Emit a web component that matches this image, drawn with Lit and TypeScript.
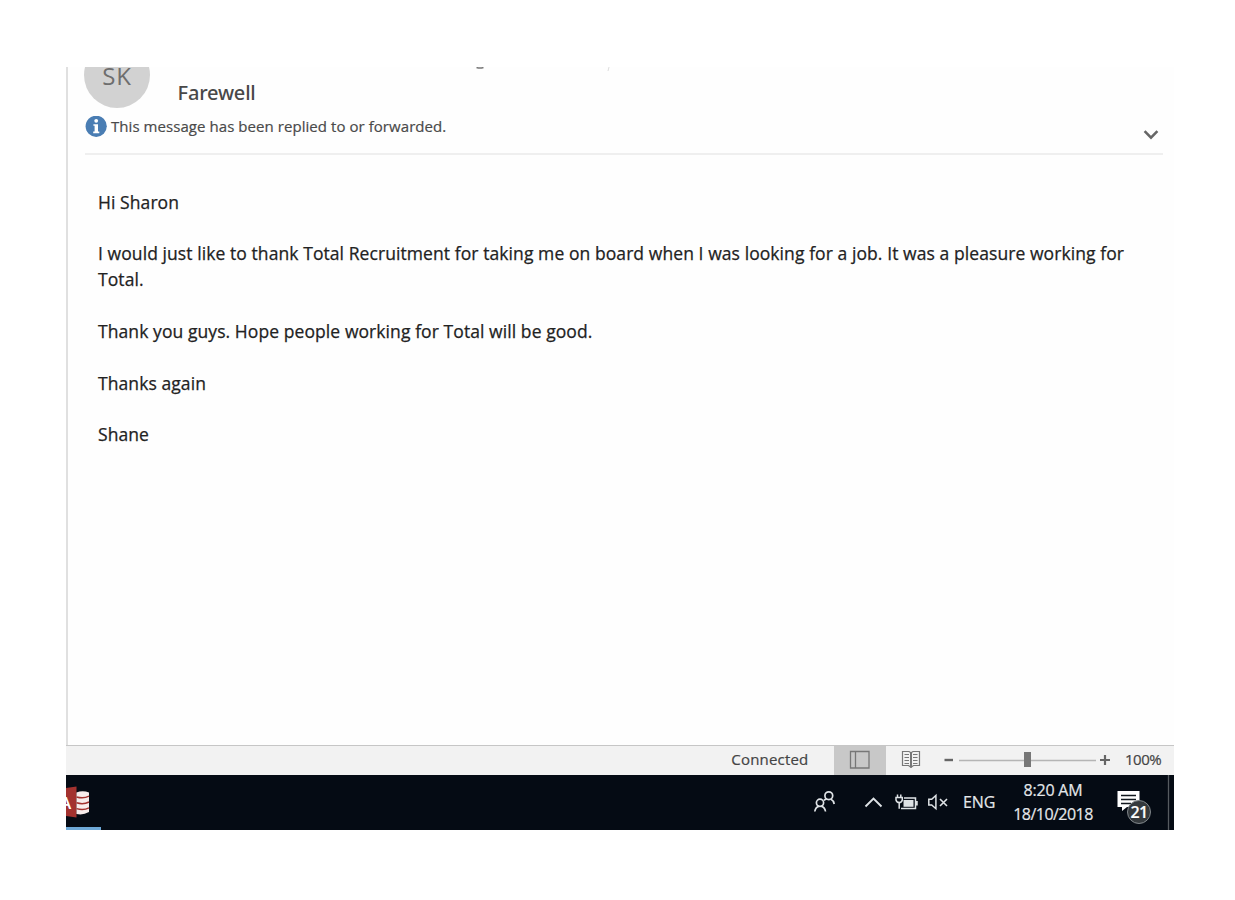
import { LitElement, html, css, svg } from "lit";
import { customElement, property } from "lit/decorators.js";

@customElement("message-header")
class MessageHeader extends LitElement {
  static styles = css`
    :host { display: block; padding: 0 11px 0 16px; position: relative; }
    .top { display: flex; height: 49px; }
    .avatar {
      flex: none; width: 66px; height: 66px; margin: -25px 0 0 0; border-radius: 50%;
      background: #d2d2d2; color: #6e6e6e; font-size: 24px; line-height: 68px;
      text-align: center; letter-spacing: 0.8px;
    }
    .subject {
      margin: 12px 0 0 27.600px; font-family: "Noto Sans", sans-serif; font-size: 20px;
      line-height: 27px; font-weight: 500; color: #484848; white-space: nowrap; letter-spacing: -0.200px;
    }
    .info {
      display: flex; height: 37px; border-bottom: 2px solid #efefef;
      margin-left: 1px; color: #4a4a4a; font-size: 15px; line-height: 20px; white-space: nowrap;
    }
    .info svg { flex: none; display: block; }
    .note { margin-left: 4px; flex: 1; letter-spacing: 0.060px; -webkit-text-stroke: 0.200px #4a4a4a; }
    .chev { margin: 11px 3px 0 0; }
    .trace { position: absolute; left: 407px; top: 0; }
  `;
  render() {
    return html`
      <div class="top">
        <div class="avatar">SK</div>
        <div class="subject">Farewell</div>
      </div>
      <div class="info">
        <svg width="22" height="22" viewBox="0 0 22 22">
          <circle cx="11.2" cy="10.3" r="10.6" fill="#4a7db3" />
          <circle cx="11.2" cy="4.8" r="1.9" fill="#fff" />
          <path d="M8.400 8.200h4.600v7.400h1.300v1.600H8.200v-1.600h1.400v-5.800H8.400z" fill="#fff" />
        </svg>
        <span class="note">This message has been replied to or forwarded.</span>
        <svg class="chev" width="18" height="14" viewBox="0 0 18 14">
          <path d="M2.6 4.2 9 10.6l6.4-6.400" fill="none" stroke="#666" stroke-width="2.6" />
        </svg>
      </div>
      <svg class="trace" width="140" height="5" viewBox="0 0 140 5">
        <path d="M1.500 .500q3.500 1 7 0" fill="none" stroke="#777" stroke-width="1.400" />
        <path d="M134 0l-1 4" stroke="#ddd" stroke-width="1" />
      </svg>
    `;
  }
}

@customElement("message-body")
class MessageBody extends LitElement {
  static styles = css`
    :host { display: block; padding: 34.800px 20px 0 30px; }
    p {
      margin: 0 0 25.850px; font-size: 17.500px; line-height: 25.850px; color: #222;
      white-space: nowrap; letter-spacing: 0.078px; -webkit-text-stroke: 0.250px #222;
    }
  `;
  @property({ attribute: false }) paragraphs: string[][] = [];
  render() {
    return this.paragraphs.map(
      (lines) => html`<p>${lines.map((l, i) => (i ? html`<br />${l}` : l))}</p>`
    );
  }
}

@customElement("status-bar")
class StatusBar extends LitElement {
  static styles = css`
    :host {
      display: flex; justify-content: flex-end; box-sizing: border-box; height: 30px;
      border-top: 1px solid #c6c6c6; background: #f2f2f2; color: #444;
      font-size: 15px; line-height: 27px; white-space: nowrap;
    }
    svg { display: block; flex: none; }
    .state { letter-spacing: 0.200px; margin-right: 25.500px; -webkit-text-stroke: 0.200px #444; }
    .view { width: 52px; background: #c8c8c8; }
    .zoom { width: 38px; margin-left: 13px; letter-spacing: -0.500px; padding-right: 11px; -webkit-text-stroke: 0.200px #444; }
  `;
  render() {
    return html`
      <span class="state">Connected</span>
      <div class="view">
        <svg width="52" height="29" viewBox="834 746 52 29">
          <path d="M850.500 751.500h18.500v16.500h-18.500zM855.500 751.500v16.500" fill="none" stroke="#777" stroke-width="1.300" />
        </svg>
      </div>
      <svg width="226" height="29" viewBox="886 746 226 29">
        <g fill="none" stroke="#777" stroke-width="1.200">
          <path d="M902.500 751.500h6.500l2 1.200 2-1.200h6.500v14h-6l-2.500 1.800-2.500-1.800h-6z" />
          <path d="M911 752.500v15" stroke-width="2" />
          <path d="M904.500 754.500h4.500m-4.500 3h4.500m-4.500 3h4.500m-4.500 3h4.500M913 754.500h4.500m-4.500 3h4.500m-4.500 3h4.500m-4.500 3h4.500" />
        </g>
        <path d="M944.500 760h8.500" stroke="#666" stroke-width="2.400" />
        <path d="M959 760.500h137" stroke="#b5b5b5" stroke-width="1.300" />
        <rect x="1024" y="752" width="7" height="15" fill="#777" />
        <path d="M1100 760h10M1105 755v10" stroke="#666" stroke-width="2.200" />
      </svg>
      <span class="zoom">100%</span>
    `;
  }
}

@customElement("task-bar")
class TaskBar extends LitElement {
  static styles = css`
    :host { display: flex; height: 55px; background: #050b14; color: #e4e7ea; font-size: 16px; white-space: nowrap; }
    svg { display: block; flex: none; }
    .app { position: relative; width: 35px; height: 55px; overflow: hidden; }
    .letter {
      position: absolute; left: -6px; top: 17px; font-size: 17px; line-height: 22px; font-weight: 600; color: #fff;
    }
    .run { position: absolute; left: 0; right: 0; bottom: 0; height: 3px; background: #6ea9d8; }
    .tray { display: flex; margin-left: auto; -webkit-text-stroke: 0.200px #e4e7ea; }
    .lang { line-height: 54px; width: 46px; padding-left: 11px; box-sizing: border-box; letter-spacing: -0.100px; }
    .clock { width: 112px; padding-top: 2.500px; line-height: 24.500px; text-align: center; box-sizing: border-box; padding-right: 2px; }
    .time { letter-spacing: -0.200px; }
    .date { letter-spacing: -0.530px; }
    .alerts { position: relative; width: 64px; }
    .count {
      position: absolute; left: 17px; top: 25px; width: 22px; height: 22px; border: 1px solid #80868a;
      border-radius: 50%; background: #34393d; color: #fff; text-align: center;
      font-size: 16px; line-height: 22px; font-weight: 600; letter-spacing: -0.600px;
    }
  `;
  render() {
    return html`
      <div class="app">
        <svg width="35" height="55" viewBox="66 775 35 55">
          <path d="M66 788l10.500-1.500v31L66 816z" fill="#a3322f" />
          <path d="M76.500 792.500q6-2.500 12.500 0v19.500q-6 3.500-12.500 2z" fill="#f7eceb" />
          <path d="M76.500 797q7 2 12.500-.8M76.500 802.800q7 2 12.500-.8M76.500 808.600q7 2 12.500-.8" fill="none" stroke="#a3322f" stroke-width="1.500" />
        </svg>
        <span class="letter">A</span>
        <div class="run"></div>
      </div>
      <div class="tray">
        <svg width="144" height="55" viewBox="808 775 144 55" fill="none" stroke="#dfe3e6" stroke-width="1.700">
          ${svg`
            <circle cx="828.800" cy="795.700" r="3.900" />
            <path d="M823.800 800.500q1.500-1.500 3-1.600M831 799.200q2.600 1.300 3.200 4.800" />
            <circle cx="820" cy="802.800" r="3.600" />
            <path d="M814.800 811.500q.6-4.500 4-5.200M821.500 806.300q3.400.8 4 5.200" />
            <path d="M865.500 806.500l8-8 8 8" stroke-width="1.900" />
            <path d="M904 798h11.500v10.500H901M917 801v4.500" stroke-width="1.500" />
            <path d="M903.500 800h10v6.800h-10z" fill="#dfe3e6" stroke="none" />
            <path d="M897.500 794.500v3M900.800 794.500v3M896 797.500h6.300v2.500q-.5 2.500-3.100 2.500t-3.200-2.500zM899.200 802.500v6.200" stroke-width="1.500" />
            <path d="M928.800 799.300h2.900l4.200-3.800v13.200l-4.200-3.700h-2.900z" stroke-width="1.500" />
            <path d="M940 799l7 7M947 799l-7 7" stroke-width="1.600" />
          `}
        </svg>
        <span class="lang">ENG</span>
        <div class="clock">
          <div class="time">8:20 AM</div>
          <div class="date">18/10/2018</div>
        </div>
        <div class="alerts">
          <svg width="64" height="55" viewBox="1110 775 64 55">
            <path d="M1117.500 791h22v16h-12.500l-5 4v-4h-4.500z" fill="#fff" />
            <path d="M1121 795.500h15M1121 799.500h15M1121 803.500h10" stroke="#12181f" stroke-width="1.500" />
            <path d="M1168.500 775v55" stroke="#565b60" stroke-width="1.300" />
          </svg>
          <div class="count">21</div>
        </div>
      </div>
    `;
  }
}

@customElement("app-root")
class AppRoot extends LitElement {
  static styles = css`
    :host {
      display: block; box-sizing: border-box; height: 900px; padding: 67px 61px 70px 66px;
      background: #fff; font-family: "Open Sans", "Noto Sans", sans-serif;
    }
    .window { display: flex; flex-direction: column; width: 1108px; height: 763px; overflow: hidden; }
    .mail { flex: 1; min-height: 0; border-left: 2px solid #e0e0e0; background: #fefefe; }
  `;
  private letter = [
    ["Hi Sharon"],
    [
      "I would just like to thank Total Recruitment for taking me on board when I was looking for a job. It was a pleasure working for",
      "Total.",
    ],
    ["Thank you guys. Hope people working for Total will be good."],
    ["Thanks again"],
    ["Shane"],
  ];
  render() {
    return html`
      <div class="window">
        <div class="mail">
          <message-header></message-header>
          <message-body .paragraphs=${this.letter}></message-body>
        </div>
        <status-bar></status-bar>
        <task-bar></task-bar>
      </div>
    `;
  }
}
